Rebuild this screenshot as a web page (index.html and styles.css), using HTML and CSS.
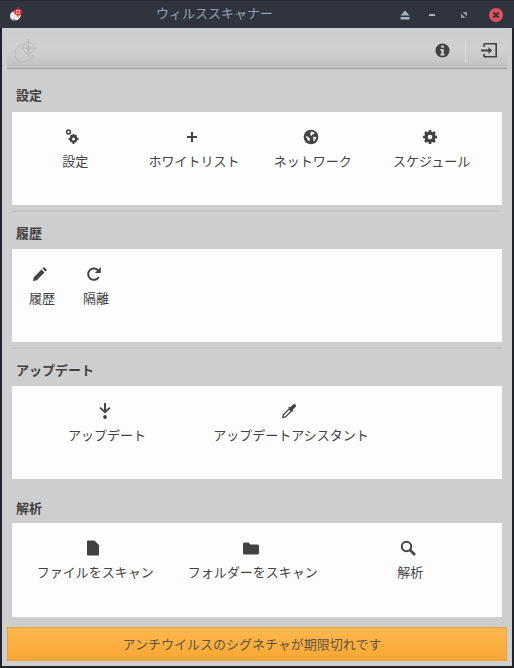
FILE: index.html
```html
<!DOCTYPE html>
<html lang="ja">
<head>
<meta charset="utf-8">
<title>ウィルススキャナー</title>
<link rel="stylesheet" href="styles.css">
</head>
<body>
<div class="window">
  <header class="titlebar">
    <svg class="app-icon" width="18" height="18" viewBox="0 0 18 18">
      <path d="M2 10c0-3 2.500-5 5.500-5.500C10.500 4 13 5 13 8c0 3.500-2.500 6.500-6 6.500-3 0-5-1.500-5-4.500z" fill="#ece8e4"/>
      <path d="M3 13.500c1.500 1.500 4 2 6.500 1l-2.500-1z" fill="#6f6f6f"/>
      <circle cx="10" cy="6" r="3" fill="#e8dcdc" stroke="#d8232a" stroke-width="1.200"/>
      <path d="M10 1v10M5 6h10" stroke="#d8232a" stroke-width="1"/>
    </svg>
    <span class="title">ウィルススキャナー</span>
    <div class="wm-buttons">
      <svg class="wm wm-eject" width="12" height="12" viewBox="0 0 12 12"><path d="M6 1.500l4.500 5h-9z M1.500 8h9v2.500h-9z" fill="#a9b2c0"/></svg>
      <svg class="wm wm-min" width="12" height="12" viewBox="0 0 12 12"><rect x="3" y="5" width="6" height="2" fill="#a9b2c0"/></svg>
      <svg class="wm wm-max" width="12" height="12" viewBox="0 0 12 12"><path d="M4.500 3h4.500v4.500zM3 4.500L7.500 9H3z" fill="#8e97a6"/></svg>
      <span class="close"><svg width="14" height="14" viewBox="0 0 14 14"><path d="M4.500 4.500l5 5M9.500 4.500l-5 5" stroke="#3a2a33" stroke-width="1.800"/></svg></span>
    </div>
  </header>
  <main class="content">
    <div class="toolbar">
      <svg class="logo" width="26" height="26" viewBox="0 0 26 26" fill="none" stroke="#b9b9b9" stroke-width="1">
        <path d="M1 14.500c0-4.500 4-8.500 8-9.500M8 23C4 23 1 20 1 14.500M8 23c5 0 9-2 11-7"/>
        <circle cx="14.500" cy="9" r="5.500"/>
        <circle cx="14.500" cy="9" r="2"/>
        <path d="M14.500 0v18M5.500 9h18"/>
      </svg>
      <div class="toolbar-actions">
        <svg class="tool-icon" width="15" height="15" viewBox="0 0 15 15"><circle cx="7.500" cy="7.500" r="7" fill="#424242"/><rect x="6.300" y="2.500" width="2.400" height="2.300" fill="#cfcfcf"/><path d="M5.300 6h3.400v5h1v1.500H5.300V11h1V7.500h-1z" fill="#cfcfcf"/></svg>
        <span class="tool-sep"></span>
        <svg class="tool-icon" width="16" height="15" viewBox="0 0 16 15" fill="none" stroke="#424242" stroke-width="1.600"><path d="M3 4V1.500a.7.7 0 0 1 .7-.7h11.500v13H3.700a.7.7 0 0 1-.7-.7V11"/><path d="M0 7.500h8" stroke-width="2"/><path d="M7.500 4L11 7.500 7.500 11z" fill="#424242" stroke="none"/></svg>
      </div>
    </div>

    <section class="group">
      <h2 class="group-title">設定</h2>
      <div class="panel cols-four">
        <div class="item">
          <svg class="icon" width="16" height="16" viewBox="0 0 16 16"><g fill="#424242"><circle cx="8.500" cy="10" r="3.700"/><path d="M7.500 5h2v10h-2zM3.500 9h10v2h-10zM4.800 7l1.400-1.400 6 6-1.400 1.400zM10.800 5.600l1.400 1.400-6 6-1.400-1.400z"/></g><circle cx="8.500" cy="10" r="1.500" fill="#fff"/><circle cx="3.500" cy="3" r="1.900" fill="none" stroke="#424242" stroke-width="1.500"/></svg>
          <span class="label">設定</span>
        </div>
        <div class="item">
          <svg class="icon" width="16" height="16" viewBox="0 0 16 16"><path d="M7 3h2v4h4v2H9v4H7V9H3V7h4z" fill="#424242"/></svg>
          <span class="label">ホワイトリスト</span>
        </div>
        <div class="item">
          <svg class="icon" width="16" height="16" viewBox="0 0 16 16"><circle cx="8" cy="8" r="7.300" fill="#424242"/><path d="M8 2.500l3 .5.500 2-2 .5-1 1.500L7 5.500zM10 7.500l3.500.5-1.500 3.500-1.500 1zM2.500 6.500L5.500 8 7 9.500l-.5 3-2-1.500z" fill="#fff" fill-opacity=".9"/></svg>
          <span class="label">ネットワーク</span>
        </div>
        <div class="item">
          <svg class="icon" width="16" height="16" viewBox="0 0 16 16"><g fill="#424242"><circle cx="8" cy="8" r="5.600"/><path d="M6.700 1h2.600v14H6.700zM1 6.700h14v2.600H1zM2.100 4l1.900-1.900 9.900 9.900-1.900 1.900zM12 2.100L13.900 4 4 13.900 2.100 12z"/></g><circle cx="8" cy="8" r="2.300" fill="#fff"/></svg>
          <span class="label">スケジュール</span>
        </div>
      </div>
      <hr class="rule">
    </section>

    <section class="group">
      <h2 class="group-title">履歴</h2>
      <div class="panel cols-auto">
        <div class="item">
          <svg class="icon" width="16" height="16" viewBox="0 0 16 16"><path d="M1 15l.8-3.800 7.700-7.700 3 3-7.700 7.700zM10.500 2.500l1.500-1.500 3 3-1.500 1.500z" fill="#424242"/></svg>
          <span class="label">履歴</span>
        </div>
        <div class="item">
          <svg class="icon" width="16" height="16" viewBox="0 0 16 16"><path d="M12.800 11a5.700 5.700 0 1 1-.4-6.300" fill="none" stroke="#424242" stroke-width="2"/><path d="M14.800 1v6h-6z" fill="#424242"/></svg>
          <span class="label">隔離</span>
        </div>
      </div>
      <hr class="rule">
    </section>

    <section class="group">
      <h2 class="group-title">アップデート</h2>
      <div class="panel cols-two">
        <div class="item">
          <svg class="icon" width="16" height="16" viewBox="0 0 16 16"><g fill="#424242"><path d="M7 0h2v7l3.300-3 1.200 1.300L8 10.500 2.500 5.300 3.700 4 7 7z"/><circle cx="8" cy="14" r="1.900"/></g></svg>
          <span class="label">アップデート</span>
        </div>
        <div class="item">
          <svg class="icon" width="16" height="16" viewBox="0 0 16 16"><path d="M1.800 14.500l.5-2.600 6-6 2.100 2.100-6 6z" fill="#fff" stroke="#424242" stroke-width="1.300"/><path d="M7.200 4.700l1-1 1 .6L12 1.500a1.700 1.700 0 0 1 2.500 2.500l-2.800 2.800.6 1-1 1z" fill="#424242"/></svg>
          <span class="label">アップデートアシスタント</span>
        </div>
      </div>
      <hr class="rule rule-hidden">
    </section>

    <section class="group">
      <h2 class="group-title">解析</h2>
      <div class="panel cols-three">
        <div class="item">
          <svg class="icon" width="16" height="16" viewBox="0 0 16 16"><path d="M2 1.500a1 1 0 0 1 1-1h6.500L14 5v9.500a1 1 0 0 1-1 1H3a1 1 0 0 1-1-1z" fill="#424242"/></svg>
          <span class="label">ファイルをスキャン</span>
        </div>
        <div class="item">
          <svg class="icon" width="16" height="16" viewBox="0 0 16 16"><path d="M0 4a1.500 1.500 0 0 1 1.500-1.500h4L7.500 4.500h7A1.500 1.500 0 0 1 16 6v7a1.500 1.500 0 0 1-1.500 1.500h-13A1.500 1.500 0 0 1 0 13z" fill="#424242"/></svg>
          <span class="label">フォルダーをスキャン</span>
        </div>
        <div class="item">
          <svg class="icon" width="16" height="16" viewBox="0 0 16 16" fill="none" stroke="#424242"><circle cx="6.500" cy="6.500" r="4.700" stroke-width="2"/><path d="M10 10l5 5" stroke-width="2.600"/></svg>
          <span class="label">解析</span>
        </div>
      </div>
    </section>

    <div class="banner">アンチウイルスのシグネチャが期限切れです</div>
  </main>
</div>
</body>
</html>
```

FILE: styles.css
```css
* { box-sizing: border-box; }
html, body { margin: 0; padding: 0; }
body {
  width: 514px;
  height: 668px;
  overflow: hidden;
  background: #22252d;
  font-family: "Noto Sans CJK JP", "Noto Sans", sans-serif;
  font-size: 13px;
  color: #424242;
}
.window {
  display: flex;
  flex-direction: column;
  height: 668px;
  padding: 0 2px 2px;
  background: #20232b;
}
.titlebar {
  position: relative;
  display: flex;
  align-items: center;
  height: 28px;
  flex: none;
  margin: 0 -2px;
  padding: 0 11px 0 8px;
  background: #2f343f;
  border-top: 1px solid #262a33;
}
.app-icon { flex: none; }
.title {
  position: absolute;
  left: 156px;
  top: 2px;
  line-height: 20px;
  color: #93a1b4;
}
.wm-buttons {
  display: flex;
  align-items: center;
  margin-left: auto;
}
.wm-min { margin-left: 15px; }
.wm-max { margin-left: 20px; }
.close {
  display: flex;
  align-items: center;
  justify-content: center;
  width: 14px;
  height: 14px;
  margin-left: 19px;
  border-radius: 50%;
  background: #d9535f;
}
.content {
  flex: 1;
  display: flex;
  flex-direction: column;
  padding: 0 5px 5px;
  background: #cecece;
}
.toolbar {
  display: flex;
  align-items: center;
  justify-content: space-between;
  flex: none;
  height: 41px;
  padding: 5px 10px 0 7px;
  background: linear-gradient(#cdcdcd 0%, #d0d0d0 55%, #c1c1c1 100%);
  border-bottom: 1px solid #9e9e9e;
}
.logo { flex: none; margin-top: 2px; }
.toolbar-actions {
  display: flex;
  align-items: center;
}
.tool-sep {
  width: 1px;
  height: 22px;
  margin: 0 15px;
  background: #dcdcdc;
}
.group {
  display: flex;
  flex-direction: column;
  flex: none;
  padding: 0 5px;
}
.group-title {
  height: 43px;
  margin: 0;
  padding: 16px 0 0 4px;
  font-size: 13px;
  line-height: 20px;
  font-weight: 700;
  color: #424242;
}
.group + .group .group-title { height: 36px; padding-top: 10px; }
.group:last-of-type .group-title { padding-top: 11px; }
.panel {
  height: 93px;
  padding-top: 17px;
  background: #fdfdfd;
}
.group:last-of-type .panel { height: 94px; }
.cols-four {
  display: grid;
  grid-template-columns: repeat(4, 118.750px);
  padding-left: 4px;
}
.cols-auto {
  display: grid;
  grid-template-columns: 54px 54px;
  padding-left: 3px;
}
.cols-two {
  display: grid;
  grid-template-columns: repeat(2, 184px);
  padding-left: 3px;
}
.cols-three {
  display: grid;
  grid-template-columns: repeat(3, 157.500px);
  padding-left: 4.500px;
}
.item {
  display: flex;
  flex-direction: column;
  align-items: center;
  align-self: start;
}
.icon {
  display: block;
  flex: none;
  margin-right: 4px;
}
.label {
  margin-top: 6px;
  line-height: 20px;
  white-space: nowrap;
  color: #424242;
}
.rule {
  width: 100%;
  height: 2px;
  margin: 6px 0 0;
  border: 0;
  border-top: 1px solid #bdbdbd;
  border-bottom: 1px solid #d6d6d6;
}
.rule-hidden { visibility: hidden; }
.banner {
  flex: none;
  height: 34px;
  margin-top: 10px;
  padding-right: 10px;
  border: 1px solid #e9a23d;
  background: linear-gradient(#ffb850, #f9a732);
  text-align: center;
  line-height: 31px;
  color: #5f5441;
}
```
